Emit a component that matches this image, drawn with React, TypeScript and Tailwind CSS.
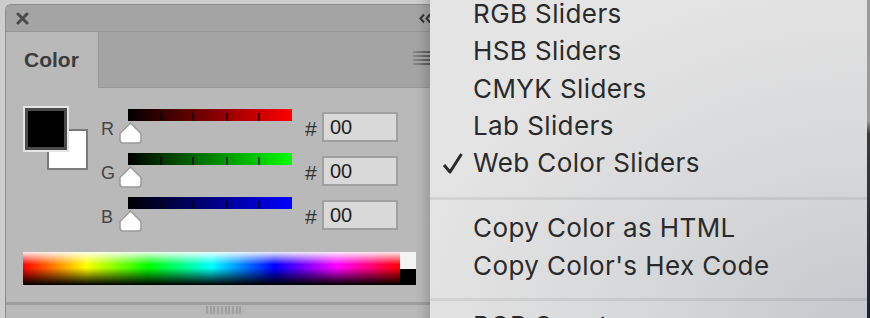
import React from "react";

function XIcon() {
  return (
    <svg width="13" height="13" viewBox="0 0 13 13">
      <path d="M2 2 L11 11 M11 2 L2 11" stroke="#4a4a4a" strokeWidth="3" strokeLinecap="round" />
    </svg>
  );
}

function Chevrons() {
  return (
    <svg width="14" height="11" viewBox="0 0 14 11">
      <path d="M5 1.5 L1.5 5.5 L5 9.5 M11 1.5 L7.5 5.5 L11 9.5" stroke="#333" strokeWidth="2" fill="none" />
    </svg>
  );
}

function Hamburger() {
  return (
    <div className="flex flex-col gap-[2px] w-[18px]">
      <div className="h-[2px] bg-[linear-gradient(to_right,#8a8a8a,#555)]" />
      <div className="h-[2px] bg-[linear-gradient(to_right,#8a8a8a,#555)]" />
      <div className="h-[2px] bg-[linear-gradient(to_right,#8a8a8a,#555)]" />
      <div className="h-[2px] bg-[linear-gradient(to_right,#8a8a8a,#555)]" />
    </div>
  );
}

function Thumb() {
  return (
    <svg width="23" height="22" viewBox="0 0 23 22" className="absolute left-[-9px] top-[13px]">
      <path
        d="M11.5 1 L22 11.5 L22 18 Q22 21 19 21 L4 21 Q1 21 1 18 L1 11.5 Z"
        fill="#ffffff"
        stroke="#9a9a9a"
        strokeWidth="1.5"
        strokeLinejoin="round"
      />
    </svg>
  );
}

function Ticks() {
  return (
    <>
      <div className="absolute bottom-0 left-[32px] w-[2px] h-[8px] bg-black/70" />
      <div className="absolute bottom-0 left-[64px] w-[2px] h-[8px] bg-black/70" />
      <div className="absolute bottom-0 left-[98px] w-[2px] h-[8px] bg-black/70" />
      <div className="absolute bottom-0 left-[130px] w-[2px] h-[8px] bg-black/70" />
    </>
  );
}

function Row({ letter, bar }: { letter: string; bar: string }) {
  return (
    <div className="flex h-[44px]">
      <div className="w-[27px] pt-[11px] text-[18px] leading-none text-[#454545]">{letter}</div>
      <div className="relative w-[164px]">
        <div className={`relative h-[12px] ${bar}`}>
          <Ticks />
        </div>
        <Thumb />
      </div>
      <div className="ml-[13px] w-[17px] pt-[9px] text-[21px] leading-none text-[#333]">#</div>
      <div className="mt-[3px] w-[76px] h-[30px] border-2 border-[#a0a0a0] bg-[#d9d9d9] flex items-center pl-[6px] text-[20px] leading-none text-[#1e1e1e]">
        00
      </div>
    </div>
  );
}

function Panel() {
  return (
    <div className="w-[445px] h-[330px] flex flex-col rounded-tl-[6px] border-l border-t border-[#8d8d8d] bg-[#b9b9b9] overflow-hidden">
      <div className="h-[27px] shrink-0 flex items-center bg-[#a4a4a4] border-b border-[#959595] pl-[10px] pr-[17px]">
        <XIcon />
        <div className="ml-auto">
          <Chevrons />
        </div>
      </div>
      <div className="h-[56px] shrink-0 flex">
        <div className="w-[93px] flex items-center pl-[18px] bg-[#b9b9b9] border-r border-[#979797] text-[21px] font-bold text-[#3c3c3c]">
          Color
        </div>
        <div className="flex-1 bg-[#a4a4a4] border-b border-[#999] flex justify-end pt-[19px] pr-[19px]">
          <Hamburger />
        </div>
      </div>
      <div className="h-[214px] shrink-0 flex flex-col pt-[18px] pl-[17px]">
        <div className="flex">
          <div className="relative w-[65px] h-[66px]">
            <div className="absolute left-[24px] top-[23px] w-[41px] h-[41px] border-2 border-[#7a7a7a] bg-white" />
            <div className="absolute left-0 top-0 w-[46px] h-[46px] border-2 border-[#e4e4e4]">
              <div className="w-full h-full border-[3px] border-[#4b4b4b] bg-black" />
            </div>
          </div>
          <div className="ml-[13px] pt-[3px] flex flex-col">
            <Row letter="R" bar="bg-[linear-gradient(to_right,#000,#ff0000)]" />
            <Row letter="G" bar="bg-[linear-gradient(to_right,#000,#00ff00)]" />
            <Row letter="B" bar="bg-[linear-gradient(to_right,#000,#0000ff)]" />
          </div>
        </div>
        <div className="mt-[11px] flex">
          <div className="w-[377px] h-[33px] bg-[linear-gradient(to_bottom,rgba(255,255,255,0.92)_0%,rgba(255,255,255,0)_38%,rgba(0,0,0,0)_48%,rgba(0,0,0,1)_100%),linear-gradient(to_right,#f00_0%,#ff0_16.7%,#0f0_33.3%,#0ff_50%,#00f_66.7%,#f0f_83.3%,#f00_100%)]" />
          <div className="w-[16px] h-[33px] flex flex-col">
            <div className="h-[17px] bg-[#f3f3f3]" />
            <div className="h-[16px] bg-black" />
          </div>
        </div>
      </div>
      <div className="h-[3px] shrink-0 bg-[#9e9e9e]" />
      <div className="flex-1 pt-[1px] pl-[200px]">
        <div className="w-[37px] h-[8px] bg-[repeating-linear-gradient(to_right,#a0a0a0_0px,#a0a0a0_2px,#b5b5b5_2px,#b5b5b5_3.7px)]" />
      </div>
    </div>
  );
}

function Check() {
  return (
    <svg width="21" height="22" viewBox="0 0 21 22">
      <path d="M2 13 L8 20 L19.5 2" stroke="#2a2a2a" strokeWidth="3" fill="none" strokeLinejoin="round" />
    </svg>
  );
}

function Item({ label, checked }: { label: string; checked?: boolean }) {
  return (
    <div className="flex items-center h-[37.25px] leading-[37.25px] whitespace-nowrap">
      <div className="w-[43px] flex justify-end pr-[10px]">{checked ? <Check /> : null}</div>
      <span>{label}</span>
    </div>
  );
}

function Menu() {
  return (
    <div className="absolute left-[430px] top-[-5px] w-[437px] h-[345px] flex flex-col bg-[radial-gradient(ellipse_at_100%_100%,#c3c6cb_0%,#d6d7d9_35%,#e4e4e4_75%)] shadow-[-4px_0_10px_rgba(0,0,0,0.18)] font-['Inter',sans-serif] text-[26px] tracking-[0.4px] text-[#2a2a2a]">
      <Item label="RGB Sliders" />
      <Item label="HSB Sliders" />
      <Item label="CMYK Sliders" />
      <Item label="Lab Sliders" />
      <Item label="Web Color Sliders" checked />
      <div className="mt-[16px] mb-[9px] h-[3px] shrink-0 bg-black/[0.07]" />
      <Item label="Copy Color as HTML" />
      <Item label="Copy Color's Hex Code" />
      <div className="mt-[14px] mb-[6px] h-[3px] shrink-0 bg-black/[0.07]" />
      <Item label="RGB Spectrum" />
    </div>
  );
}

export default function App() {
  return (
    <div className="relative w-[870px] h-[318px] overflow-hidden bg-[#cdcdcd] font-['Liberation_Sans',Arial,sans-serif]">
      <div className="pl-[5px] pt-[4px]">
        <Panel />
      </div>
      <Menu />
      <div className="absolute right-0 top-0 h-full w-[3px] bg-[linear-gradient(to_bottom,#9a9a9a_0%,#9a9a9a_38%,#3a3a3a_42%,#1c2230_100%)]" />
    </div>
  );
}
